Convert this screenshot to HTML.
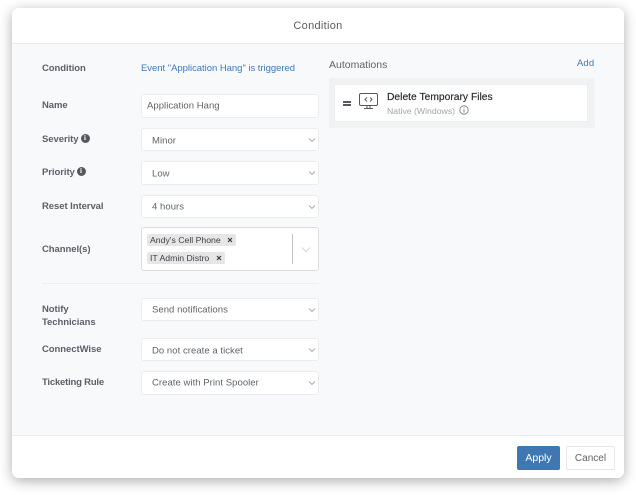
<!DOCTYPE html>
<html><head><meta charset="utf-8"><style>
html,body{margin:0;padding:0;width:636px;height:495px;background:#fff;overflow:hidden;font-family:"Liberation Sans",sans-serif}
#w{position:absolute;left:0;top:0;width:636px;height:495px;filter:blur(.3px)}
.a{position:absolute;white-space:nowrap}
.modal{position:absolute;left:12px;top:8px;width:612px;height:470px;border-radius:7px;background:#f8f9fb;box-shadow:0 3px 13px rgba(0,0,0,.32);overflow:hidden}
.head{position:absolute;left:0;top:0;width:612px;height:35px;background:#fff;border-bottom:1px solid #e9ecef}
.foot{position:absolute;left:0;top:427px;width:612px;height:43px;background:#fff;border-top:1px solid #e9ecef}
.l{position:absolute;left:42px;font-size:9.5px;font-weight:bold;color:#5c6066;white-space:nowrap;line-height:12px;letter-spacing:-.06px}
.f{position:absolute;left:141px;width:176px;background:#fff;border:1px solid #eaecf0;border-radius:3px;font-size:9.5px;color:#5f6368;box-sizing:content-box}
.f span{position:absolute;left:10px;top:50%;transform:translateY(-50%);white-space:nowrap;letter-spacing:.05px}
.f svg{position:absolute;right:2px;top:50%;margin-top:-3px}
.i{position:absolute;width:9px;height:9px;border-radius:50%;background:#55595f;color:#fff;font-size:7px;font-weight:bold;line-height:9px;text-align:center;font-family:"Liberation Serif",serif}
.tag{position:absolute;height:12px;background:#e6e6e6;border-radius:2px;font-size:8.7px;line-height:12px;color:#3c3f44;padding-left:3px;white-space:nowrap;box-sizing:border-box}
</style></head><body><div id="w">
<div class="modal"><div class="head"></div><div class="foot"></div></div>

<div class="a" style="left:0;width:636px;top:19px;text-align:center;font-size:11px;line-height:14px;color:#5a5e63;letter-spacing:.3px">Condition</div>

<div class="l" style="top:63px">Condition</div>
<div class="a" style="left:141px;top:63px;font-size:9.5px;line-height:12px;color:#3f78b8;letter-spacing:-.03px">Event "Application Hang" is triggered</div>

<div class="l" style="top:100px">Name</div>
<div class="f" style="top:94px;height:22px"><span style="left:5px">Application Hang</span></div>

<div class="l" style="top:134px">Severity</div><div class="i" style="left:80.5px;top:134px">i</div>
<div class="f" style="top:128px;height:21px"><span style="margin-top:1px">Minor</span><svg width="8" height="6" viewBox="0 0 8 6"><path d="M1 1.5L4 4.5L7 1.5" fill="none" stroke="#a4a8ad" stroke-width=".9"/></svg></div>

<div class="l" style="top:167px">Priority</div><div class="i" style="left:76.5px;top:167px">i</div>
<div class="f" style="top:161px;height:22px"><span style="margin-top:1px">Low</span><svg width="8" height="6" viewBox="0 0 8 6"><path d="M1 1.5L4 4.5L7 1.5" fill="none" stroke="#a4a8ad" stroke-width=".9"/></svg></div>

<div class="l" style="top:201px">Reset Interval</div>
<div class="f" style="top:195px;height:21px"><span>4 hours</span><svg width="8" height="6" viewBox="0 0 8 6"><path d="M1 1.5L4 4.5L7 1.5" fill="none" stroke="#a4a8ad" stroke-width=".9"/></svg></div>

<div class="l" style="top:244px">Channel(s)</div>
<div class="f" style="top:227px;height:42px;border-color:#d9dce0"></div>
<div class="tag" style="left:147px;top:234px;width:89px">Andy's Cell Phone</div>
<svg class="a" style="left:227px;top:237px" width="6" height="6" viewBox="0 0 6 6"><path d="M1 1L5 5M5 1L1 5" stroke="#33363a" stroke-width="1.1"/></svg>
<div class="tag" style="left:147px;top:252px;width:78px">IT Admin Distro</div>
<svg class="a" style="left:216px;top:255px" width="6" height="6" viewBox="0 0 6 6"><path d="M1 1L5 5M5 1L1 5" stroke="#33363a" stroke-width="1.1"/></svg>
<div class="a" style="left:292px;top:234px;width:1px;height:30px;background:#c2c5c9"></div>
<svg class="a" style="left:301px;top:246px" width="10" height="7" viewBox="0 0 10 7"><path d="M1 1.5L5 5.5L9 1.5" fill="none" stroke="#d2d5d8" stroke-width="1"/></svg>

<div class="a" style="left:42px;top:283px;width:277px;height:1px;background:#eceef1"></div>

<div class="l" style="top:303px;line-height:13px">Notify<br>Technicians</div>
<div class="f" style="top:298px;height:21px"><span>Send notifications</span><svg width="8" height="6" viewBox="0 0 8 6"><path d="M1 1.5L4 4.5L7 1.5" fill="none" stroke="#a4a8ad" stroke-width=".9"/></svg></div>

<div class="l" style="top:344px">ConnectWise</div>
<div class="f" style="top:338px;height:21px"><span style="margin-top:1px">Do not create a ticket</span><svg width="8" height="6" viewBox="0 0 8 6"><path d="M1 1.5L4 4.5L7 1.5" fill="none" stroke="#a4a8ad" stroke-width=".9"/></svg></div>

<div class="l" style="top:377px;letter-spacing:-.2px">Ticketing Rule</div>
<div class="f" style="top:371px;height:22px"><span>Create with Print Spooler</span><svg width="8" height="6" viewBox="0 0 8 6"><path d="M1 1.5L4 4.5L7 1.5" fill="none" stroke="#a4a8ad" stroke-width=".9"/></svg></div>

<div class="a" style="left:329px;top:58px;font-size:10.5px;line-height:14px;color:#5f6368">Automations</div>
<div class="a" style="left:577px;top:58px;font-size:9.5px;line-height:12px;color:#3f78b8;letter-spacing:.1px">Add</div>

<div class="a" style="left:329px;top:78px;width:266px;height:50px;background:#f1f2f4;border-radius:2px"></div>
<div class="a" style="left:334px;top:84px;width:254px;height:38px;background:#fff;border:1px solid #eceef0;box-sizing:border-box;border-radius:2px"></div>
<div class="a" style="left:343px;top:101px;width:8px;height:1.5px;background:#55595f"></div>
<div class="a" style="left:343px;top:104px;width:8px;height:1.5px;background:#55595f"></div>
<svg class="a" style="left:359px;top:92px" width="20" height="18" viewBox="0 0 20 18"><rect x=".5" y="1.5" width="18" height="12" rx="1.5" fill="none" stroke="#55595f" stroke-width="1"/><path d="M8 5.5L6 7.5L8 9.5M11 5.5L13 7.5L11 9.5" fill="none" stroke="#55595f" stroke-width="1"/><path d="M8 13.5V16M11 13.5V16M5 16.5H14" fill="none" stroke="#55595f" stroke-width="1"/></svg>
<div class="a" style="left:387px;top:91px;font-size:10.3px;line-height:14px;color:#25282c;-webkit-text-stroke:.15px #25282c">Delete Temporary Files</div>
<div class="a" style="left:387px;top:104.5px;font-size:8.7px;line-height:12px;color:#a2a5a9">Native (Windows)</div>
<svg class="a" style="left:459px;top:105px" width="10" height="10" viewBox="0 0 10 10"><circle cx="5" cy="5" r="4.2" fill="none" stroke="#75797e" stroke-width=".8"/><path d="M5 4.2V7.4M5 2.4V3.3" stroke="#75797e" stroke-width=".9"/></svg>

<div class="a" style="left:517px;top:446px;width:43px;height:24px;background:#3f77b2;border-radius:2px;color:#fff;font-size:10.5px;line-height:25px;text-align:center">Apply</div>
<div class="a" style="left:566px;top:446px;width:49px;height:24px;background:#fff;border:1px solid #e6e8ea;box-sizing:border-box;border-radius:2px;color:#5f6368;font-size:10px;line-height:24px;text-align:center">Cancel</div>
</div></body></html>
